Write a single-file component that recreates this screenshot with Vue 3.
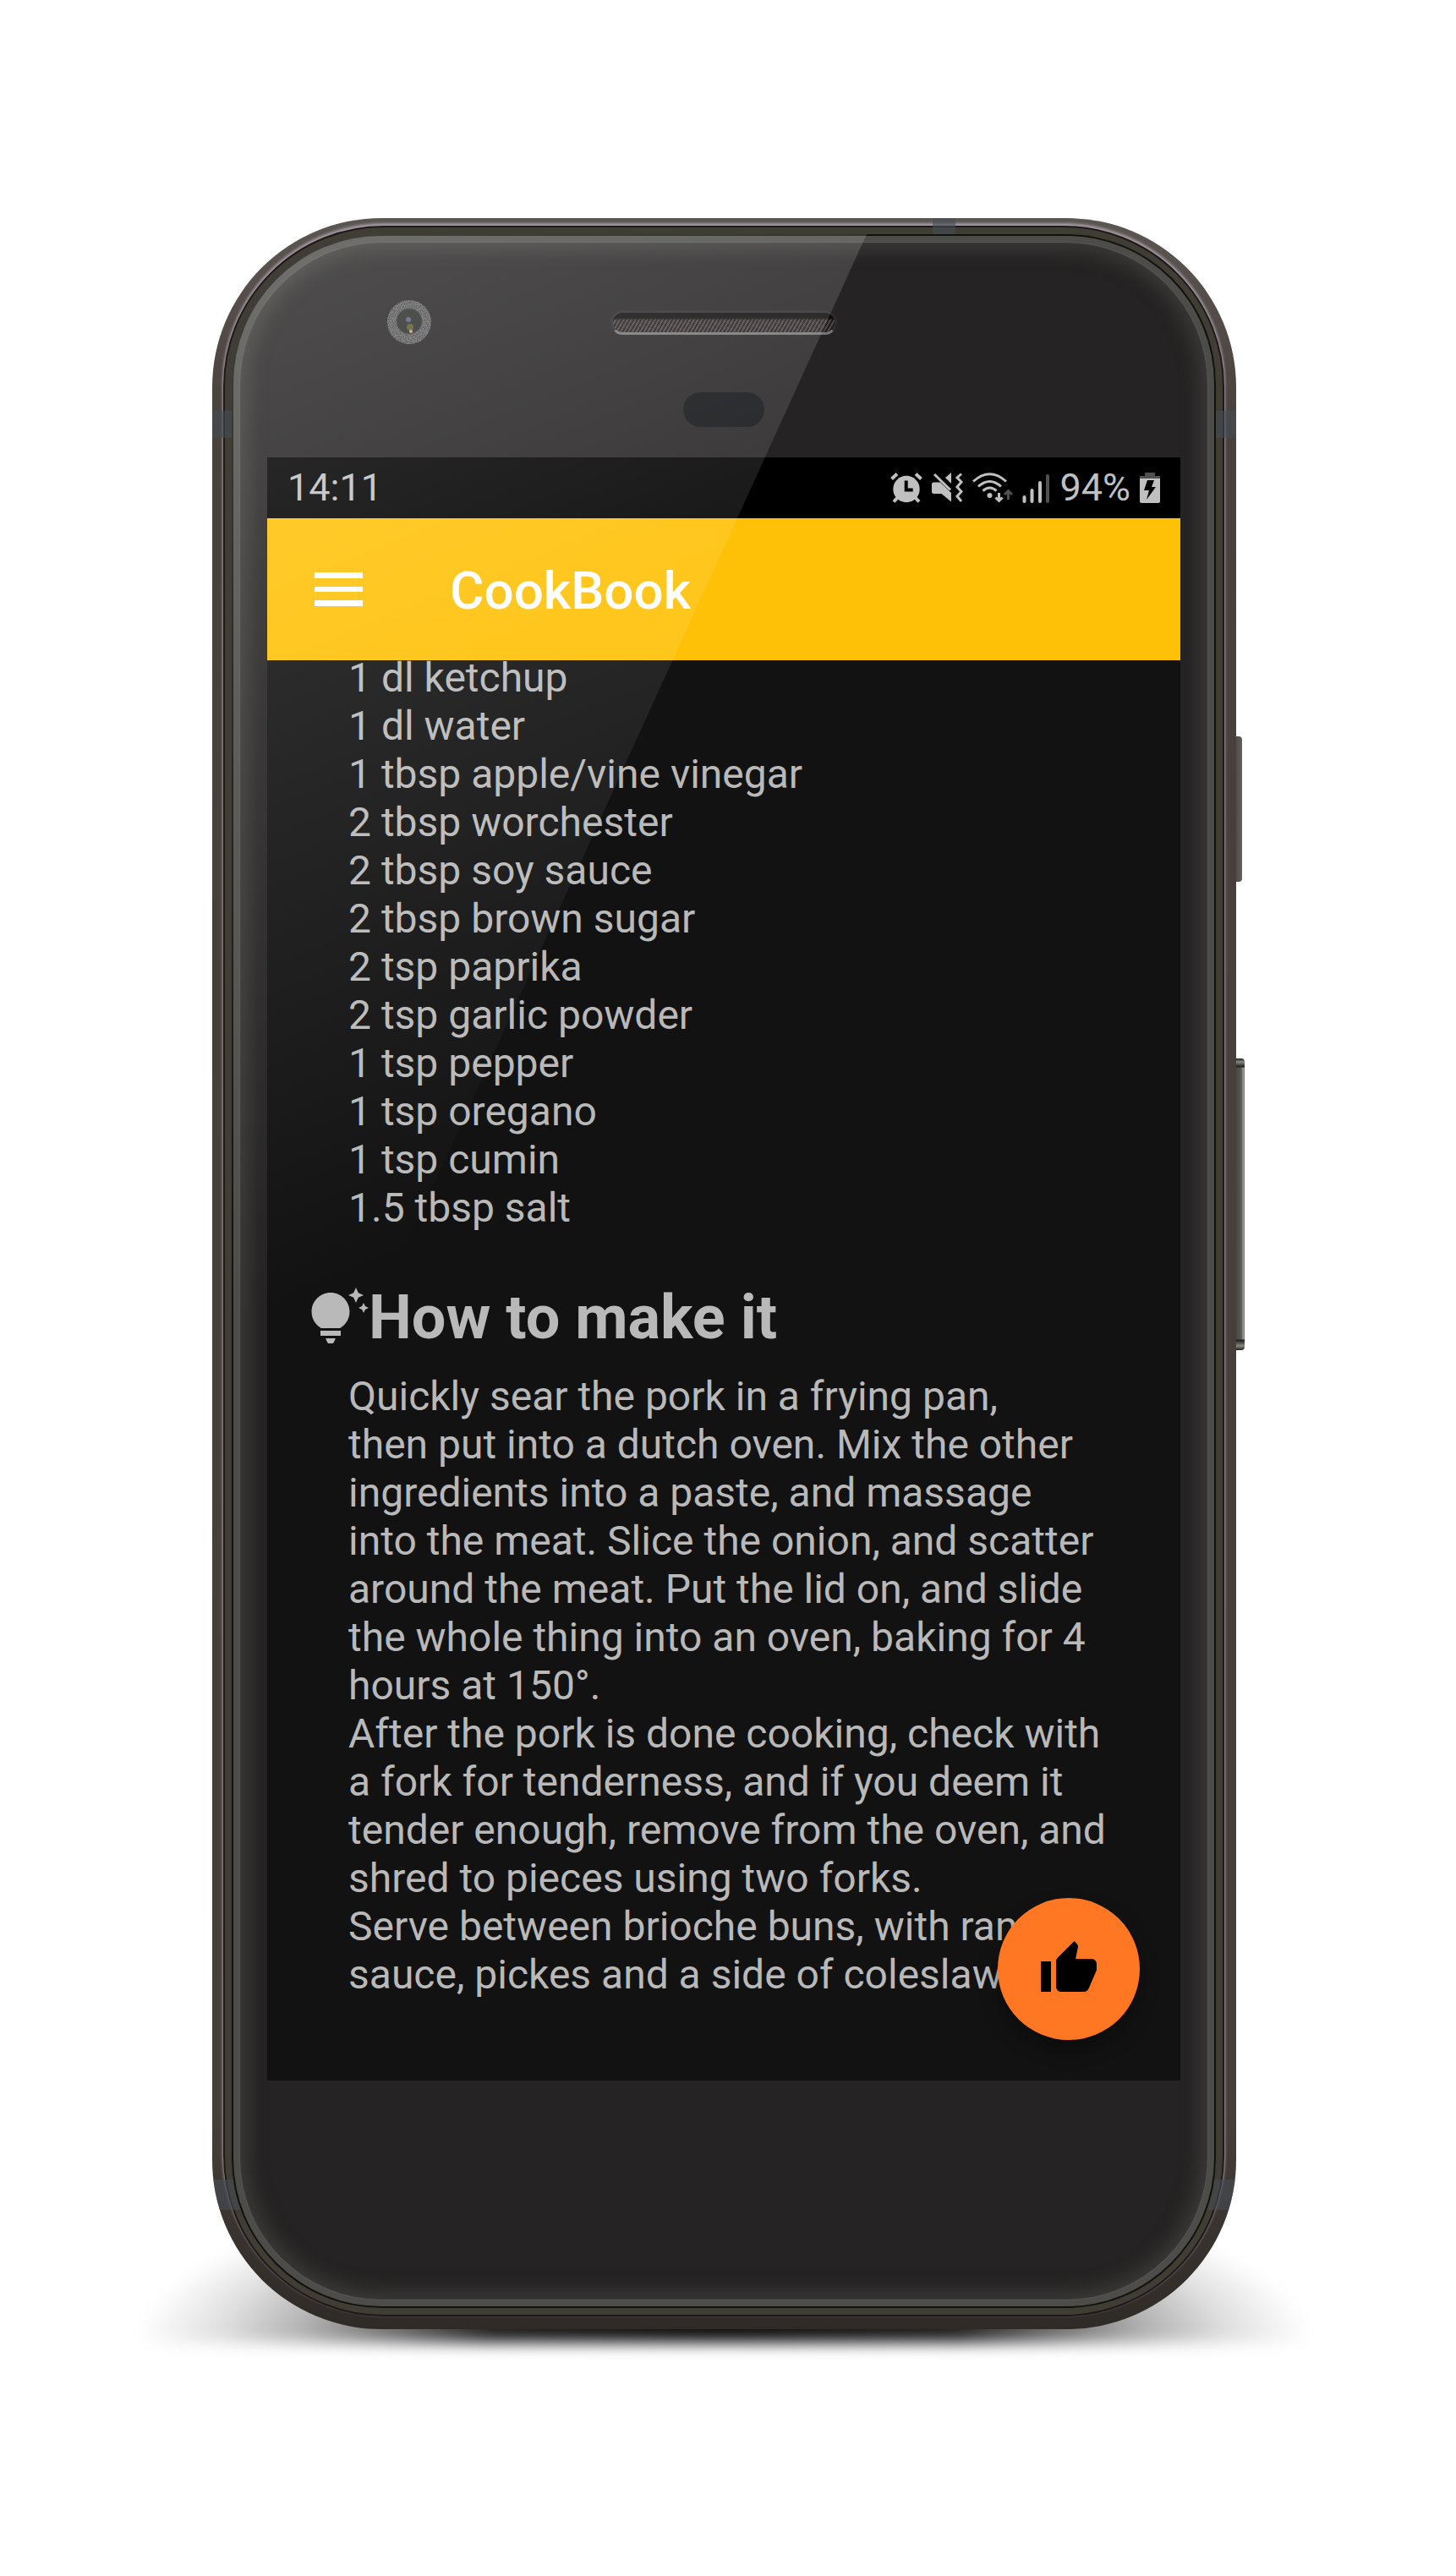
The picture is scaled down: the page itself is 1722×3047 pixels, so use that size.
<script setup>
const ingredients = [
  '1 dl ketchup',
  '1 dl water',
  '1 tbsp apple/vine vinegar',
  '2 tbsp worchester',
  '2 tbsp soy sauce',
  '2 tbsp brown sugar',
  '2 tsp paprika',
  '2 tsp garlic powder',
  '1 tsp pepper',
  '1 tsp oregano',
  '1 tsp cumin',
  '1.5 tbsp salt',
]

const steps = [
  `Quickly sear the pork in a frying pan,
then put into a dutch oven. Mix the other
ingredients into a paste, and massage
into the meat. Slice the onion, and scatter
around the meat. Put the lid on, and slide
the whole thing into an oven, baking for 4
hours at 150°.`,
  `After the pork is done cooking, check with
a fork for tenderness, and if you deem it
tender enough, remove from the oven, and
shred to pieces using two forks.`,
  `Serve between brioche buns, with ranch
sauce, pickes and a side of coleslaw.`,
]
</script>

<template>
  <main class="page">
    <div class="phone">
      <div class="ground-shadow"></div>
      <div class="side-key power"></div>
      <div class="side-key volume"></div>
      <div class="rim">
        <div class="bezel"></div>
        <i class="antenna top"></i>
        <i class="antenna upper left"></i>
        <i class="antenna upper right"></i>
        <i class="antenna lower left"></i>
        <i class="antenna lower right"></i>
      </div>

      <div class="glass">
        <div class="forehead">
          <div class="sensors">
            <svg class="camera" viewBox="0 0 54 54" aria-hidden="true">
              <defs>
                <radialGradient id="lens">
                  <stop offset="0" stop-color="#2c2c2c" />
                  <stop offset="1" stop-color="#2a2c28" />
                </radialGradient>
                <filter id="grain">
                  <feTurbulence type="fractalNoise" baseFrequency=".8" numOctaves="2" />
                  <feColorMatrix values="0 0 0 0 .8  0 0 0 0 .8  0 0 0 0 .85  1.6 0 0 0 -.5" />
                  <feComposite in2="SourceGraphic" operator="in" />
                </filter>
              </defs>
              <circle cx="27" cy="27" r="26" fill="#434344" />
              <circle cx="27" cy="27" r="26" fill="#fff" filter="url(#grain)" opacity=".5" />
              <circle cx="27" cy="26" r="15" fill="url(#lens)" stroke="#3b3b3a" />
              <circle cx="26" cy="24" r="3" fill="#5b607c" />
              <circle cx="28" cy="33" r="4" fill="#5c5a2c" />
              <circle cx="29" cy="38" r="2" fill="#c7a273" />
            </svg>
            <div class="earpiece"></div>
          </div>
          <div class="proximity"></div>
        </div>

        <div class="screen">
          <header class="status">
            <time>14:11</time>
            <div class="status-icons">
              <svg width="38" height="36" viewBox="0 0 38 36" aria-hidden="true">
                <path d="M1.500 7.500 8 1.500M36.500 7.500 30 1.500" stroke="#c0c0c0" stroke-width="4" />
                <path d="M4 34.500 9 29M34 34.500 29 29" stroke="#c0c0c0" stroke-width="4" />
                <circle cx="19" cy="19.500" r="15.700" fill="#c0c0c0" />
                <path d="M18.700 9.500v11h8" stroke="#000" stroke-width="4" fill="none" />
              </svg>
              <svg width="37" height="36" viewBox="0 0 37 36" aria-hidden="true">
                <path d="M0 14q0-2.500 2.500-2.500H10L23 24v10.500L11.500 25h-9Q0 25 0 22.500z" fill="#c0c0c0" />
                <path d="M3 2 22 20.500" stroke="#c0c0c0" stroke-width="3" />
                <path d="M23 0v13l-7-7z" fill="#c0c0c0" />
                <path d="M35 1.500 30 6l5 5-5 6 5 5.500-5 5.500 5 6" fill="none" stroke="#c0c0c0" stroke-width="3" />
              </svg>
              <svg width="48" height="36" viewBox="0 0 48 36" aria-hidden="true">
                <g fill="none" stroke="#c0c0c0" stroke-width="3">
                  <path d="M1 10.500Q20.500-7 40 10.500M7 16.500q13.500-12 27 0M12.500 21.500q8-7 16 0" />
                  <path d="M31.500 24v9M27.500 29.500l4 4 4-4" />
                </g>
                <path d="M42.500 32v-10M38 26l4.500-4.500L47 26" fill="none" stroke="#505050" stroke-width="3" />
                <circle cx="20.500" cy="27" r="3" fill="#c0c0c0" />
              </svg>
              <svg width="33" height="36" viewBox="0 0 33 36" aria-hidden="true">
                <path d="M2.500 29v5M11.500 21v13M21 12v22" stroke="#c0c0c0" stroke-width="4" stroke-linecap="round" />
                <path d="M30 4v30" stroke="#505050" stroke-width="4" stroke-linecap="round" />
              </svg>
              <span class="level">94%</span>
              <svg width="24" height="36" viewBox="0 0 24 36" aria-hidden="true">
                <path d="M6 0h12v4h6v4H0V4h6z" fill="#505050" />
                <path d="M0 7h24v27q0 2-2 2H2q-2 0-2-2z" fill="#c0c0c0" />
                <path d="M9 9h8l-3 8h5L8 32l3-11H5z" fill="#000" />
              </svg>
            </div>
          </header>

          <nav class="appbar">
            <button class="menu" type="button" aria-label="Open menu">
              <svg width="57" height="40" viewBox="0 0 57 40" aria-hidden="true">
                <path d="M0 0h57v7H0zM0 17h57v6H0zM0 33h57v7H0z" fill="#fff" />
              </svg>
            </button>
            <h1>CookBook</h1>
          </nav>

          <section class="recipe">
            <ul>
              <li v-for="item in ingredients" :key="item">{{ item }}</li>
            </ul>
            <h2>
              <svg width="72" height="72" viewBox="0 0 24 24" aria-hidden="true">
                <path
                  fill="#b9b9b9"
                  d="M7 20h4c-.2 0-.6 2-1.200 2H8.200C7.600 22 7.200 20 7 20zM5 19h8v-2H5zM16.500 9.500c0 3.820-2.660 5.860-3.770 6.500H5.270C4.160 15.360 1.500 13.320 1.500 9.500 1.500 5.360 4.860 2 9 2s7.500 3.360 7.500 7.500zM21.370 8.630 22 10l.63-1.370L24 8l-1.370-.63L22 6l-.63 1.370L20 8zM19 6l.94-2.060L22 3l-2.060-.94L19 0l-.94 2.060L16 3l2.060.94z"
                />
              </svg>
              <span>How to make it</span>
            </h2>
            <div class="steps">
              <p v-for="step in steps" :key="step">{{ step }}</p>
            </div>
            <button class="fab" type="button" aria-label="Like recipe">
              <svg width="72" height="72" viewBox="0 0 24 24" aria-hidden="true">
                <path
                  d="M1 21h4V9H1v12zm22-11c0-1.100-.9-2-2-2h-6.310l.95-4.570.03-.32c0-.41-.17-.79-.44-1.060L14.170 1 7.590 7.590C7.220 7.950 7 8.450 7 9v10c0 1.100.9 2 2 2h9c.83 0 1.540-.5 1.840-1.220l3.020-7.050c.09-.23.14-.47.14-.73v-2z"
                />
              </svg>
            </button>
          </section>
        </div>

        <div class="glare"></div>
      </div>
    </div>
  </main>
</template>

<style>
body {
  margin: 0;
  background: #fff;
}
</style>

<style scoped>
.page {
  box-sizing: border-box;
  padding: 258px 260px 292px 251px;
  overflow: hidden;
  font-family: Roboto, "Liberation Sans", sans-serif;
  color: #b9b9b9;
}

.phone {
  position: relative;
  display: grid;
}

.rim,
.glass {
  grid-area: 1 / 1;
}

/* Shadow the phone casts on the floor */
.ground-shadow {
  position: absolute;
  left: -90px;
  right: -90px;
  bottom: -16px;
  height: 200px;
  background: radial-gradient(
    ellipse 50% 100% at 50% 100%,
    rgba(0, 0, 0, 0.95) 0,
    rgba(0, 0, 0, 0.88) 40%,
    rgba(0, 0, 0, 0.6) 55%,
    rgba(0, 0, 0, 0.3) 72%,
    rgba(0, 0, 0, 0.12) 86%,
    rgba(0, 0, 0, 0) 100%
  );
  filter: blur(9px);
}

.side-key {
  position: absolute;
  left: calc(100% - 2px);
  border-radius: 0 4px 4px 0;
}

.power {
  top: 613px;
  width: 9px;
  height: 172px;
  background: linear-gradient(90deg, #4b4643, #5d5955 80%, #6c6269);
}

.volume {
  top: 994px;
  width: 12px;
  height: 345px;
  background:
    linear-gradient(#1c1b19, #8a8a84 4px, #1c1b19 10px, transparent 11px, transparent 332px, #1c1b19 333px, #8a8a84 340px, #1c1b19),
    linear-gradient(90deg, #3f413a, #5b5e54 70%, #a5a1a8 85%, #6a6a66);
}

.rim {
  position: relative;
  display: grid;
  overflow: hidden;
  padding: 9px 14px 15px 13px;
  border-radius: 200px;
  background: linear-gradient(#5c5653, #48403d 10%, #463e3b 90%, #2e2a26);
}

.bezel {
  border: 2px solid #20171a;
  border-radius: 190px;
  background: #403d35;
  box-shadow: 0 -2px 3px 1px #a09aa0;
}

.antenna {
  position: absolute;
  background: rgba(70, 77, 84, 0.6);
}

.antenna.top {
  top: 0;
  right: 332px;
  width: 27px;
  height: 24px;
}

.antenna.upper {
  top: 228px;
  width: 24px;
  height: 32px;
}

.antenna.lower {
  bottom: 141px;
  width: 36px;
  height: 36px;
}

.antenna.left {
  left: 0;
}

.antenna.right {
  right: 0;
}

.glass {
  position: relative;
  overflow: hidden;
  margin: 19px 24px 25px 23px;
  padding: 0 42px 269px;
  border-radius: 177px;
  background: #252323;
  box-shadow:
    inset 0 0 0 2px #12110e,
    inset 0 0 0 9px #4c4c48,
    inset 0 0 1px 10px #58585a,
    inset 0 0 20px 20px #3a3937;
}

.forehead {
  box-sizing: border-box;
  display: flex;
  flex-direction: column;
  align-items: center;
  height: 264px;
  padding-top: 77px;
  gap: 56px;
}

.sensors {
  display: grid;
  grid-template-columns: 1fr auto 1fr;
  align-items: center;
  width: 100%;
}

.camera {
  width: 54px;
  height: 54px;
  margin-left: 141px;
}

.earpiece {
  box-sizing: border-box;
  width: 268px;
  height: 29px;
  border: 3px solid #2c2c30;
  border-bottom-color: #77757a;
  border-radius: 15px;
  background:
    linear-gradient(#0d0c0a 6px, transparent 9px),
    repeating-linear-gradient(120deg, #211d1c 0 2px, #4c4645 2px 4px);
}

.proximity {
  width: 96px;
  height: 41px;
  border-radius: 21px;
  background: #0f1114;
}

.screen {
  position: relative;
  background: #121212;
}

.status {
  box-sizing: border-box;
  display: flex;
  align-items: center;
  justify-content: space-between;
  height: 72px;
  padding: 0 24px;
  background: #000;
  color: #c0c0c0;
  font-size: 45px;
  line-height: 54px;
}

.status-icons {
  display: flex;
  align-items: center;
  gap: 11px;
}

.status-icons svg {
  display: block;
}

.appbar {
  box-sizing: border-box;
  display: flex;
  align-items: center;
  height: 168px;
  padding: 0 48px;
  gap: 96px;
  background: #ffc107;
}

.menu {
  display: grid;
  place-items: center;
  width: 72px;
  height: 72px;
  padding: 0;
  border: 0;
  background: none;
}

h1 {
  margin: 0;
  padding-top: 4px;
  color: #fff;
  font-size: 62px;
  font-weight: 500;
  line-height: 72px;
}

.recipe {
  position: relative;
  display: flow-root;
  padding: 0 48px 97px;
  font-size: 48px;
  line-height: 57px;
}

/* The list is scrolled slightly under the app bar */
ul {
  margin: -8px 0 0;
  padding: 0 48px;
  list-style: none;
}

h2 {
  display: flex;
  align-items: center;
  margin: 60px 0 22px;
  font-size: 72px;
  font-weight: 700;
  line-height: 84px;
}

.steps {
  padding: 0 0 0 48px;
}

p {
  margin: 0;
  white-space: pre;
}

.fab {
  position: absolute;
  right: 48px;
  bottom: 48px;
  display: grid;
  place-items: center;
  width: 168px;
  height: 168px;
  padding: 0;
  border: 0;
  border-radius: 50%;
  background: #ff7722;
  box-shadow: 0 12px 24px rgba(0, 0, 0, 0.3);
}

/* Diagonal light reflection over the upper left of the glass */
.glare {
  position: absolute;
  inset: 0;
  pointer-events: none;
  clip-path: polygon(0 0, 751px 0, 0 1649px);
  background: linear-gradient(
    158deg,
    rgba(255, 255, 255, 0.2) 0,
    rgba(255, 255, 255, 0.1) 520px,
    rgba(255, 255, 255, 0) 1200px
  );
}
</style>
